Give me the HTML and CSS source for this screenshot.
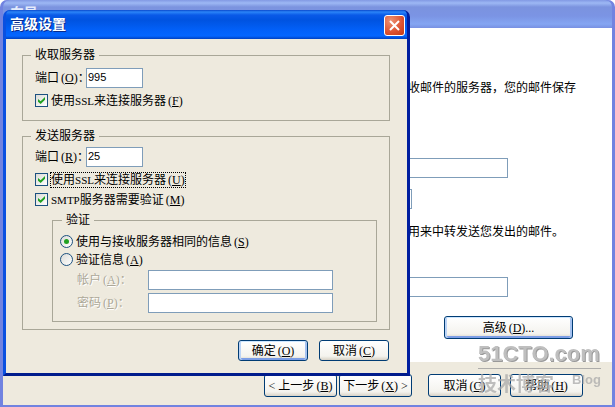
FILE: index.html
```html
<!DOCTYPE html>
<html lang="zh-CN">
<head>
    <meta charset="UTF-8">
    <meta name="viewport" content="width=device-width, initial-scale=1.0">
    <title>高级设置</title>
    <link rel="stylesheet" href="styles.css">
</head>
<body>
    <!-- Account wizard -->
    <main class="wizard">
        <header class="wizard-title">向导</header>
        <div class="wizard-body">
            <div class="wizard-column">
                <p class="hint hint-receive">收邮件的服务器，您的邮件保存</p>
                <input class="text-box receive-server" type="text" aria-label="接收服务器">
                <input class="text-box receive-type" type="text" aria-label="服务器类型">
                <p class="hint hint-send">用来中转发送您发出的邮件。</p>
                <input class="text-box send-server" type="text" aria-label="发送服务器">
                <button class="btn btn-default btn-advanced" type="button">高级<span class="key">(<u>D</u>)...</span></button>
            </div>
        </div>
        <footer class="wizard-footer">
            <div class="step-buttons">
                <button class="btn btn-step" type="button">&lt; 上一步<span class="key">(<u>B</u>)</span></button>
                <button class="btn btn-step" type="button">下一步<span class="key">(<u>X</u>)</span> &gt;</button>
            </div>
            <div class="end-buttons">
                <button class="btn btn-step" type="button">取消<span class="key">(<u>C</u>)</span></button>
                <button class="btn btn-step" type="button">帮助<span class="key">(<u>H</u>)</span></button>
            </div>
        </footer>
    </main>

    <!-- Advanced settings -->
    <form class="dialog" role="dialog" aria-labelledby="dialog-name">
        <header class="dialog-title">
            <h1 id="dialog-name">高级设置</h1>
            <button class="close" type="button" aria-label="关闭">
                <svg viewBox="0 0 19 19" width="19" height="19"><path d="M5 5l9 9M14 5l-9 9" stroke="#fff" stroke-width="2" fill="none"/></svg>
            </button>
        </header>
        <div class="dialog-body">
            <fieldset class="group receive">
                <legend>收取服务器</legend>
                <div class="port">
                    <label for="receive-port">端口<span class="key">(<u>O</u>)</span>：</label>
                    <input class="text-box" id="receive-port" type="text" value="995">
                </div>
                <div class="option">
                    <input type="checkbox" id="receive-ssl" checked>
                    <label for="receive-ssl">使用<span class="latin">SSL</span>来连接服务器<span class="key">(<u>F</u>)</span></label>
                </div>
            </fieldset>

            <fieldset class="group send">
                <legend>发送服务器</legend>
                <div class="port">
                    <label for="send-port">端口<span class="key">(<u>R</u>)</span>：</label>
                    <input class="text-box" id="send-port" type="text" value="25">
                </div>
                <div class="option focused">
                    <input type="checkbox" id="send-ssl" checked>
                    <label for="send-ssl">使用<span class="latin">SSL</span>来连接服务器<span class="key">(<u>U</u>)</span></label>
                </div>
                <div class="option">
                    <input type="checkbox" id="send-auth" checked>
                    <label for="send-auth"><span class="latin">SMTP</span>服务器需要验证<span class="key">(<u>M</u>)</span></label>
                </div>

                <fieldset class="group auth">
                    <legend>验证</legend>
                    <div class="option">
                        <input type="radio" name="auth" id="auth-same" checked>
                        <label for="auth-same">使用与接收服务器相同的信息<span class="key">(<u>S</u>)</span></label>
                    </div>
                    <div class="option">
                        <input type="radio" name="auth" id="auth-other">
                        <label for="auth-other">验证信息<span class="key">(<u>A</u>)</span></label>
                    </div>
                    <div class="login">
                        <label for="account">帐户<span class="key">(<u>A</u>)</span>：</label>
                        <input class="text-box" id="account" type="text" disabled>
                    </div>
                    <div class="login">
                        <label for="password">密码<span class="key">(<u>P</u>)</span>：</label>
                        <input class="text-box" id="password" type="password" disabled>
                    </div>
                </fieldset>
            </fieldset>

            <div class="dialog-buttons">
                <button class="btn btn-default" type="button">确定<span class="key">(<u>O</u>)</span></button>
                <button class="btn" type="button">取消<span class="key">(<u>C</u>)</span></button>
            </div>
        </div>
    </form>

    <!-- Site mark -->
    <div class="mark">
        <div class="mark-name">51CTO.com</div>
        <div class="mark-sub"><span>技术博客</span><span class="mark-blog">Blog</span></div>
    </div>
</body>
</html>
```

FILE: styles.css
```css
* { box-sizing: border-box; }
body { margin: 0; position: relative; font: 12px/14px "Liberation Serif", "Noto Sans CJK SC", serif; color: #000; }
p, h1 { margin: 0; }
input, button { font: inherit; margin: 0; }

/* Shared controls */
.text-box { height: 20px; min-width: 0; padding: 0 1px 2px; border: 1px solid #7f9db9; background: #fff; font: 11px/14px "Liberation Sans", "Noto Sans CJK SC", sans-serif; color: #000; }
.btn { height: 21px; padding: 0; border: 1px solid #003c74; border-radius: 3px; background: linear-gradient(#fff, #f4f3ee 80%, #d8d2c6); color: #000; line-height: 14px; white-space: nowrap; }
.btn-default { box-shadow: inset 0 1px #cee7ff, inset 2px 0 #bcd4f6, inset -2px 0 #a5c2f0, inset 0 -2px #7c9ee6; }
.key { padding-left: 2px; }
.latin { font-size: 11px; line-height: 10px; }

/* Wizard window */
.wizard { min-height: 100vh; display: flex; flex-direction: column; border: solid #7183e0; border-width: 0 3px 2px; border-radius: 7px 7px 0 0; background: #7183e0; }
.wizard-title { height: 28px; padding: 7px 7px 0; border-radius: 7px 7px 0 0; background: linear-gradient(#8299e4, #9db8f4 3px, #7b93df 7px, #7b94e4 16px, #84a5f2 24px, #7890e2); color: #e4ebfc; font-size: 14px; font-weight: bold; }
.wizard-body { flex: 1; display: flex; justify-content: flex-end; background: #fff; }
.wizard-column { width: 312px; display: flex; flex-direction: column; align-items: flex-start; padding: 53px 0 23px; }
.hint { padding-left: 108px; white-space: nowrap; }
.hint-receive { margin-bottom: 63px; }
.receive-server, .send-server { width: 208px; }
.receive-type { width: 112px; margin: 11px 0 16px; }
.hint-send { margin-bottom: 38px; }
.btn-advanced { align-self: flex-end; width: 129px; height: 23px; margin: 19px 39px 0 0; }
.wizard-footer { display: flex; justify-content: flex-end; gap: 16px; padding: 12px 29px 8px 0; background: #eeeade; }
.step-buttons { display: flex; gap: 2px; }
.end-buttons { display: flex; gap: 9px; }
.btn-step { width: 73px; height: 23px; }

/* Dialog window */
.dialog { position: absolute; top: 10px; left: 3px; right: 205px; border: solid #0831d9; border-color: #0040c8 #001ea0 #001c8c #0a50e0; border-width: 0 3px 3px; border-radius: 7px 7px 0 0; background: #0855dd; }
.dialog-title { height: 29px; display: flex; align-items: center; justify-content: space-between; padding: 1px 2px 0 4px; border-radius: 5px 5px 0 0; background: linear-gradient(#0a48cc, #2b85f8 2px, #0a5ae8 5px, #0053e0 10px, #0260f8 20px, #0466ff 26px, #0040c0); }
.dialog-title h1 { color: #fff; font-size: 14px; line-height: 16px; text-shadow: 1px 1px #0a2a8a; }
.close { width: 21px; height: 21px; display: flex; padding: 0; border: 1px solid #fff; border-radius: 3px; background: radial-gradient(circle at 30% 25%, #ee9273, #dc5130 60%, #c23a14); }
.dialog-body { padding: 9px 17px 12px 16px; background: #eeeade; }

.group { min-width: 0; margin: 0; border: 1px solid #a9a798; }
.group legend { height: 14px; margin-left: -4px; padding: 0 4px; }
.receive, .send { display: flex; flex-direction: column; gap: 5px; }
.receive { margin-bottom: 8px; padding: 6px 12px 12px; }
.send { padding: 4px 12px 7px; }
.auth { display: flex; flex-direction: column; gap: 3px; margin: 1px 0 0 17px; padding: 7px 43px 8px 7px; }
.auth legend { margin-left: 2px; }

.port, .option, .login { display: flex; align-items: center; white-space: nowrap; }
.port label { width: 51px; }
.port .text-box { width: 57px; }
.option { height: 15px; gap: 3px; }
.focused label { outline: 1px dotted #000; }
.login { padding-left: 17px; }
.login label { width: 71px; color: #aca899; text-shadow: 1px 1px #fff; }
.login .text-box { flex: 1; }

/* Tick boxes and radios */
.option input { appearance: none; flex: none; width: 13px; height: 13px; display: grid; place-items: center; border: 1px solid #1c5180; background: linear-gradient(135deg, #dcdcd7, #fff); }
.option input[type="radio"] { border-radius: 50%; }
.option input:checked::before { content: ""; width: 7px; height: 7px; background: #21a121; clip-path: polygon(0 30%, 38% 62%, 100% 0, 100% 40%, 38% 100%, 0 68%); }
.option input[type="radio"]:checked::before { width: 5px; height: 5px; border-radius: 50%; clip-path: none; }

.dialog-buttons { display: flex; justify-content: flex-end; gap: 11px; padding: 10px 1px 0 0; }
.dialog-buttons .btn { width: 70px; }

/* Site mark over the lower right corner */
.mark { position: absolute; right: 14px; bottom: 10px; width: 123px; color: #aaa; opacity: 0.75; pointer-events: none; }
.mark-name { border-bottom: 1px solid #999; font: bold 22px/28px "Liberation Sans", sans-serif; text-shadow: 1px 1px #777; }
.mark-sub { display: flex; justify-content: space-between; font: bold 19px/28px "Noto Sans CJK SC", sans-serif; }
.mark-blog { font: bold 13px/22px "Liberation Sans", sans-serif; }
```
